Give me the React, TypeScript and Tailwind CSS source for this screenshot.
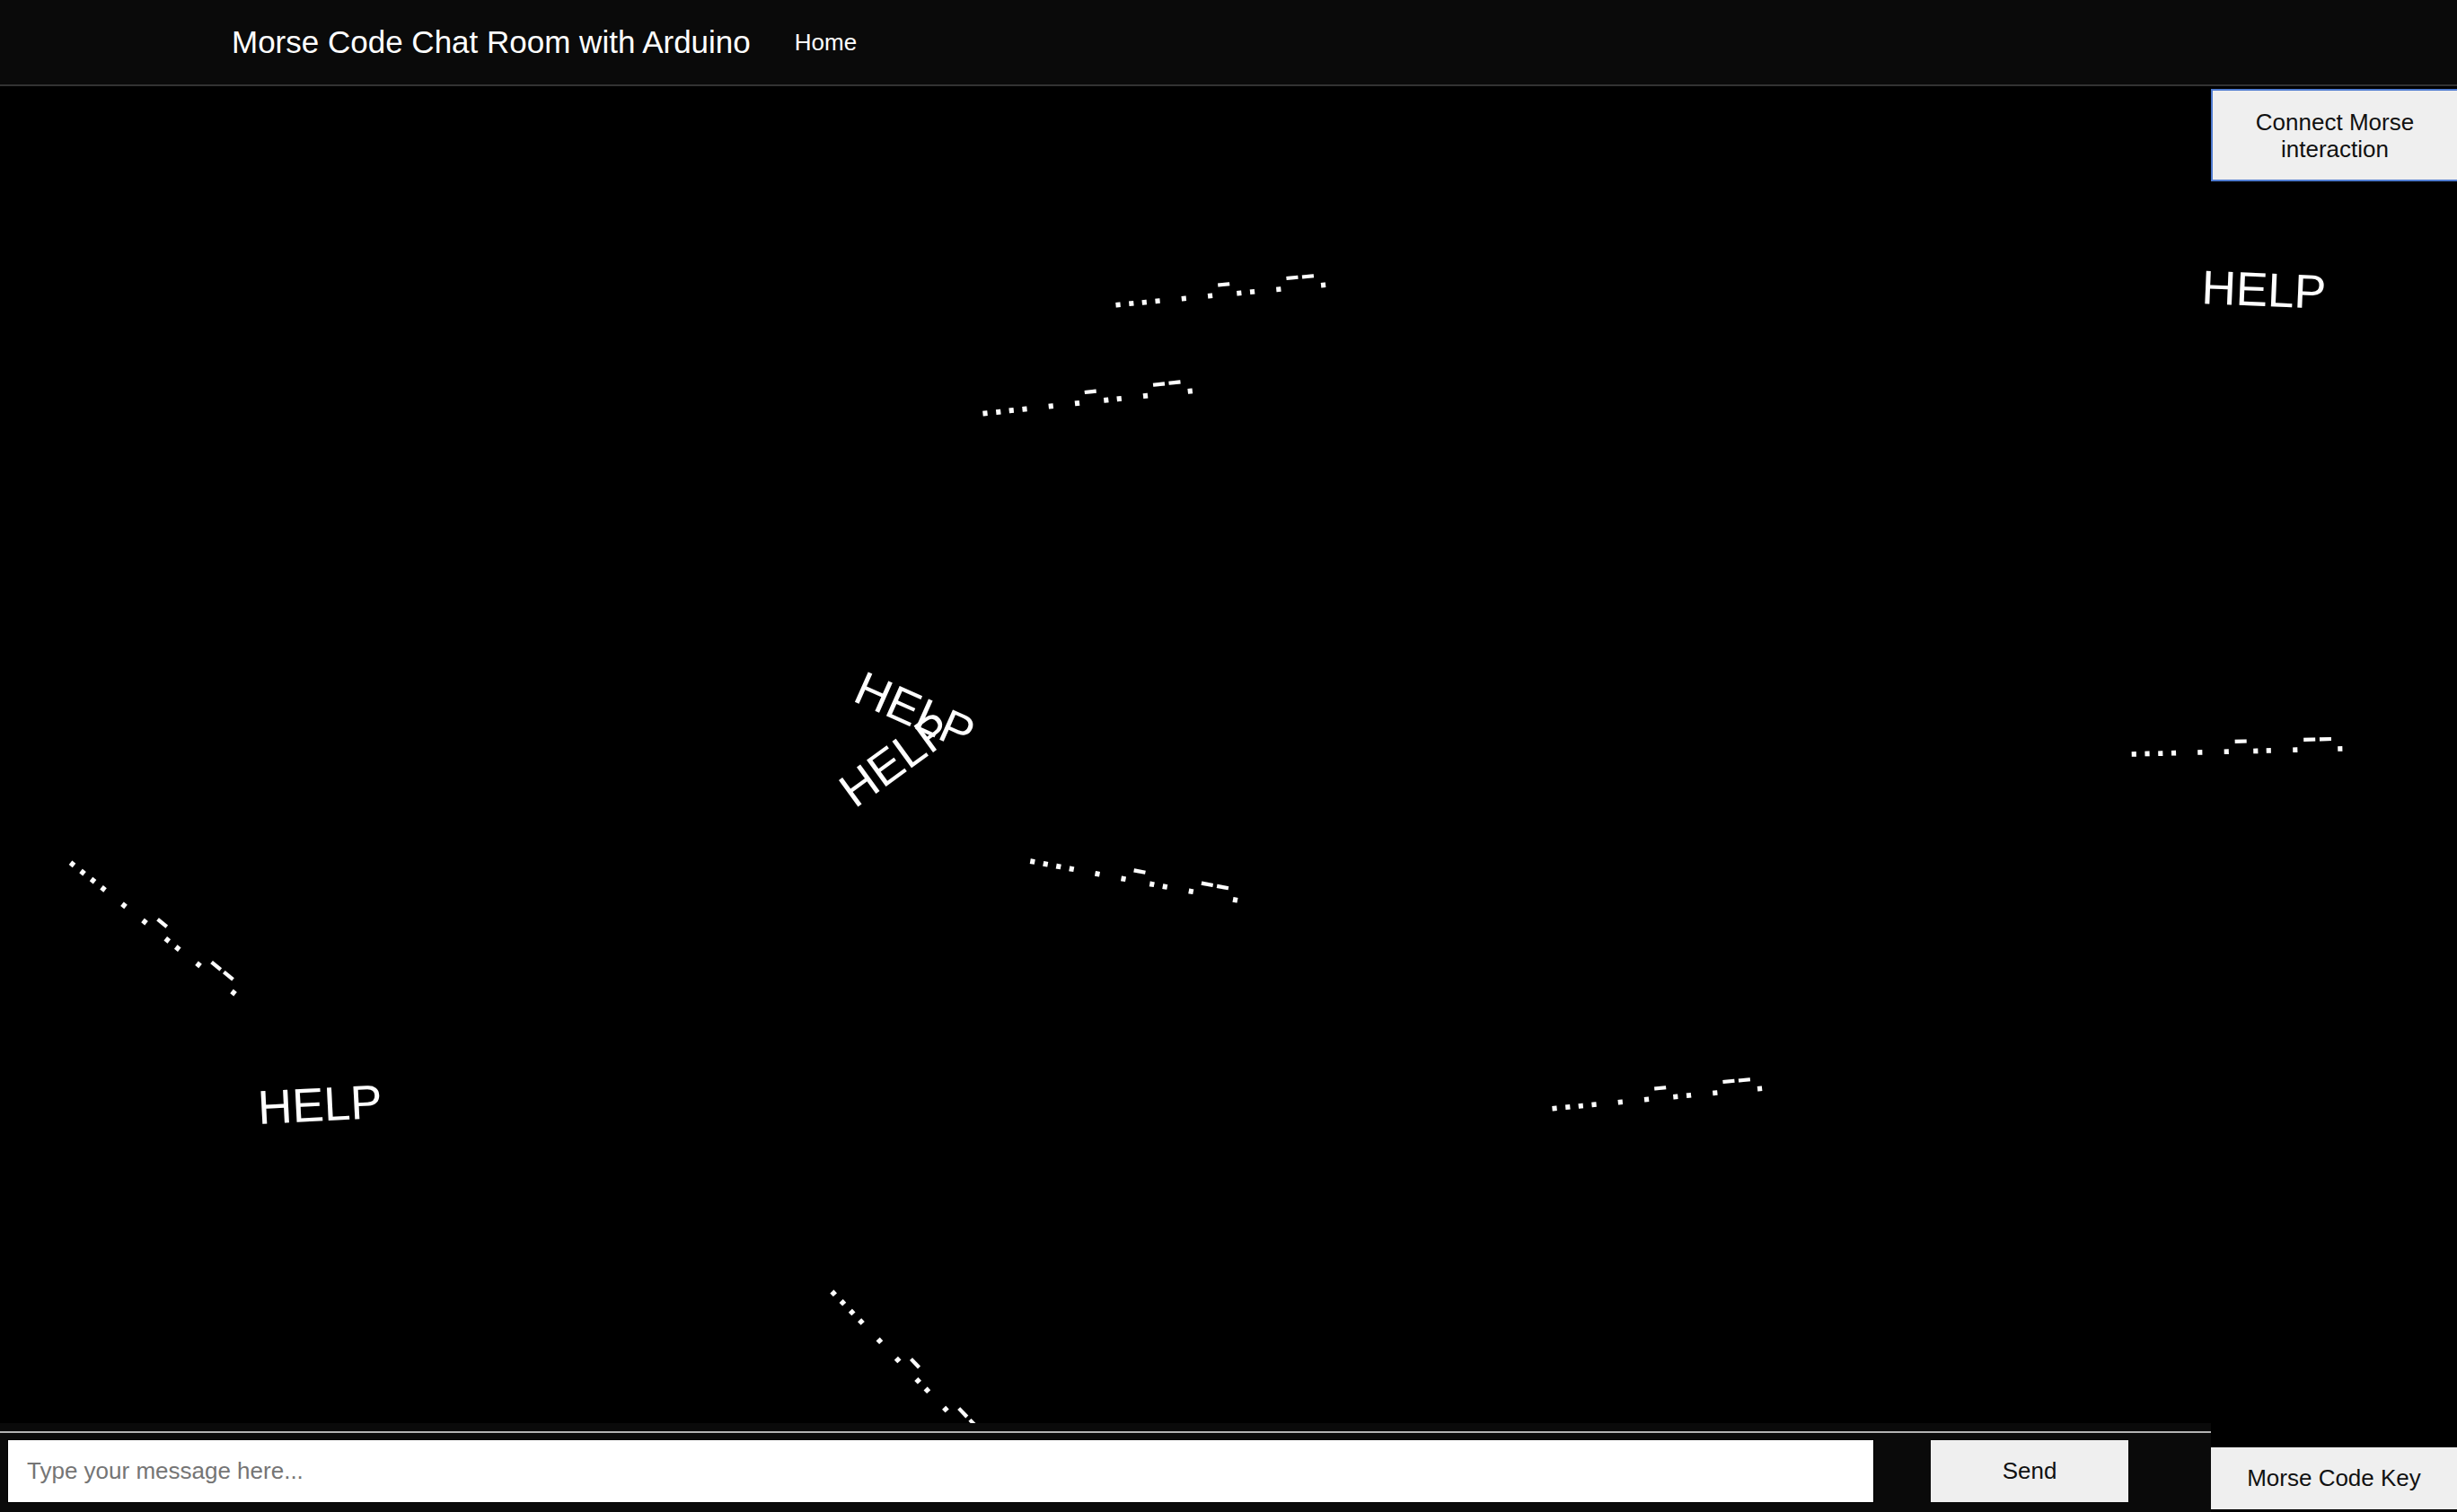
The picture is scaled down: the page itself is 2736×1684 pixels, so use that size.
import React from 'react'

const MORSE = '.... . .-.. .--.'

// first dot centre (page px) and the angle of the baseline, in degrees
const morseMarks = [
  { x: 1245, y: 340, angle: -5.5 },
  { x: 1097, y: 461, angle: -6.2 },
  { x: 2376, y: 840, angle: -1.5 },
  { x: 1150, y: 960, angle: 10.7 },
  { x: 80, y: 963, angle: 38.6 },
  { x: 1731, y: 1235, angle: -5.5 },
  { x: 928, y: 1441, angle: 46 },
]

// baseline start (page px)
const helpMarks = [
  { x: 2451, y: 338, angle: 2.4 },
  { x: 288, y: 1252, angle: -2.9 },
  { x: 948, y: 780, angle: 24 },
  { x: 952, y: 901, angle: -36 },
]

const HEADER_H = 96
const BASELINE = 45

function FloatingText({ text, x, y, angle }: { text: string; x: number; y: number; angle: number }) {
  return (
    <span
      className="absolute whitespace-pre text-[53px] leading-[53px] text-white origin-[0px_45px]"
      style={{ left: x, top: y - HEADER_H - BASELINE, transform: `rotate(${angle}deg)` }}
    >
      {text}
    </span>
  )
}

function morseOrigin(m: { x: number; y: number; angle: number }) {
  const r = (m.angle * Math.PI) / 180
  const c = Math.cos(r)
  const s = Math.sin(r)
  // dot centre sits 7.4px along the baseline and 2.6px above it
  return { x: m.x - 7.4 * c - 2.6 * s, y: m.y - 7.4 * s + 2.6 * c, angle: m.angle }
}

export default function App() {
  return (
    <div className="h-screen w-full flex flex-col bg-black overflow-hidden font-['Liberation_Sans',Arial,sans-serif]">
      <header className="h-[96px] shrink-0 flex items-center gap-[49px] pl-[258px] bg-[#0a0a0a] border-b-2 border-[#333333]">
        <span className="text-[35px] text-white">Morse Code Chat Room with Arduino</span>
        <span className="text-[26px] text-white">Home</span>
      </header>

      <main className="relative flex-1 min-h-0">
        <div className="absolute inset-0 overflow-hidden">
          {morseMarks.map((m, i) => {
            const o = morseOrigin(m)
            return <FloatingText key={`m${i}`} text={MORSE} x={o.x} y={o.y} angle={o.angle} />
          })}
          {helpMarks.map((h, i) => (
            <FloatingText key={`h${i}`} text="HELP" x={h.x} y={h.y} angle={h.angle} />
          ))}
        </div>

        <div className="relative z-10 h-full flex">
          <div className="flex-1 flex flex-col justify-end">
            <div className="h-[99px] bg-[#0a0a0a] pt-[9px]">
              <div className="h-[2px] bg-[#b3b3b3]" />
              <div className="flex items-start pt-[7px] pl-[8px]">
                <input
                  type="text"
                  placeholder="Type your message here..."
                  className="w-[2079px] h-[71px] bg-white border border-black pl-[21px] text-[26px] text-black placeholder:text-[#757575] outline-none"
                />
                <button className="ml-[63px] mt-[1px] w-[220px] h-[69px] bg-[#efefef] text-[26px] text-[#111111]">
                  Send
                </button>
              </div>
            </div>
          </div>

          <div className="w-[274px] flex flex-col justify-between">
            <button className="mt-[3px] h-[103px] bg-[#efefef] border-2 border-r-0 border-[#4f7bd0] text-[26px] leading-[30px] text-[#111111]">
              Connect Morse
              <br />
              interaction
            </button>
            <button className="mb-[3px] h-[69px] bg-[#efefef] text-[26px] text-[#111111]">Morse Code Key</button>
          </div>
        </div>
      </main>
    </div>
  )
}
